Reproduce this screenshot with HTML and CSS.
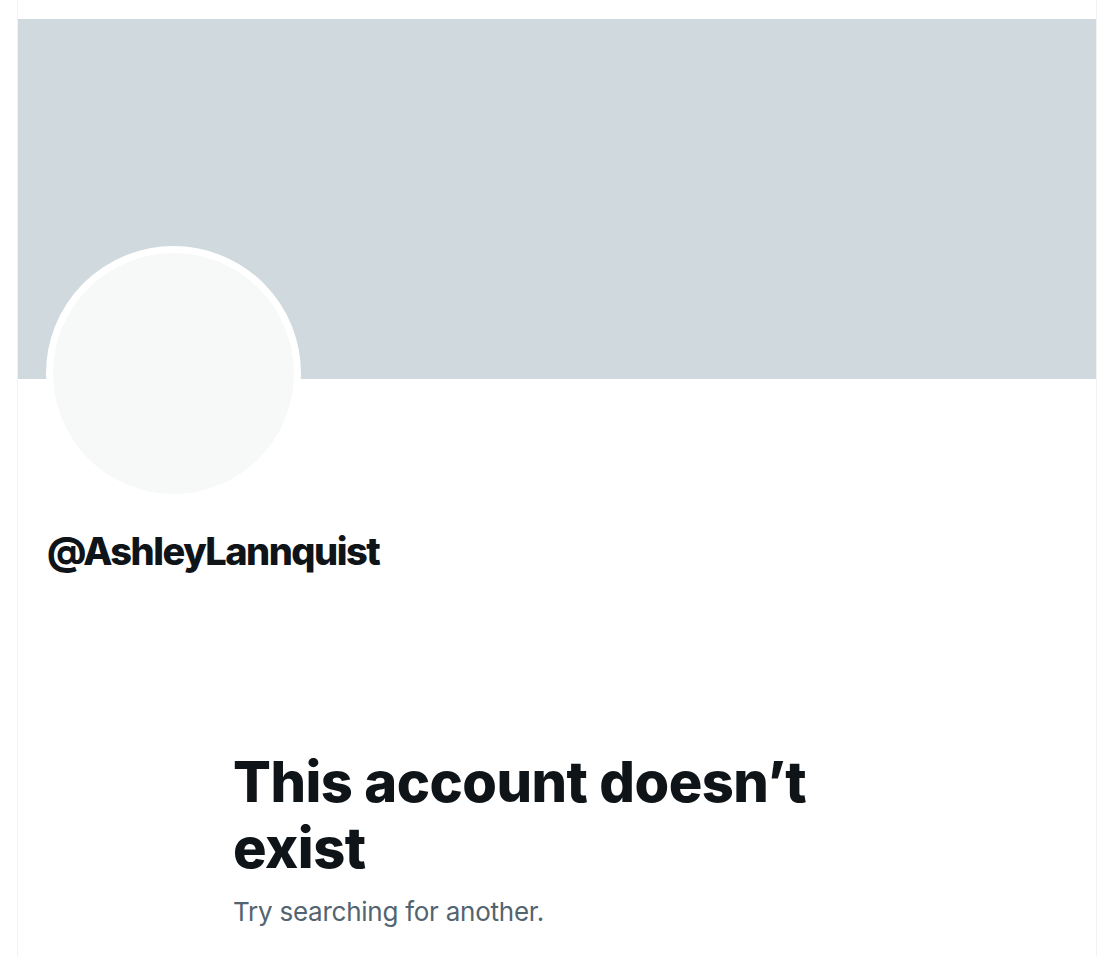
FILE: index.html
```html
<!DOCTYPE html>
<html lang="en">
<head>
  <meta charset="UTF-8" />
  <meta name="viewport" content="width=device-width, initial-scale=1.0">
  <title>@AshleyLannquist</title>
  <link rel="stylesheet" href="styles.css">
</head>
<body>
  <main class="column">
    <div class="top-gap"></div>
    <div class="banner"></div>
    <div class="profile">
      <div class="avatar"><div class="avatar-inner"></div></div>
      <h2 class="handle">@AshleyLannquist</h2>
    </div>
    <section class="empty">
      <h1 class="empty-title">This account doesn’t exist</h1>
      <p class="empty-text">Try searching for another.</p>
    </section>
  </main>
</body>
</html>
```

FILE: styles.css
```css
body { margin: 0; background: #fff; font-family: Inter, "Noto Sans", sans-serif; color: #0f1419; }
.column { margin-left: 17px; width: 1078px; min-height: 956px; border-left: 1px solid #eff3f4; border-right: 1px solid #eff3f4; }
.top-gap { height: 19px; }
.banner { height: 360px; background: #cfd9de; }
.profile { padding-left: 29px; }
.avatar { width: 241px; height: 241px; border: 7px solid #fff; border-radius: 50%; background: #fff; margin-top: -133px; margin-left: -1px; }
.avatar-inner { width: 100%; height: 100%; border-radius: 50%; background: #f7f9f9; }
.handle { margin: 26px 0 0; font-size: 38px; line-height: 48px; font-weight: 800; letter-spacing: -1.5px; }
.empty { width: 648px; margin: 174px auto 0; }
.empty-title { margin: 0; font-size: 56px; line-height: 66px; font-weight: 800; letter-spacing: -0.5px; }
.empty-text { margin: 13px 0 0; font-size: 26px; line-height: 36px; color: #536471; letter-spacing: -0.25px; }
```
